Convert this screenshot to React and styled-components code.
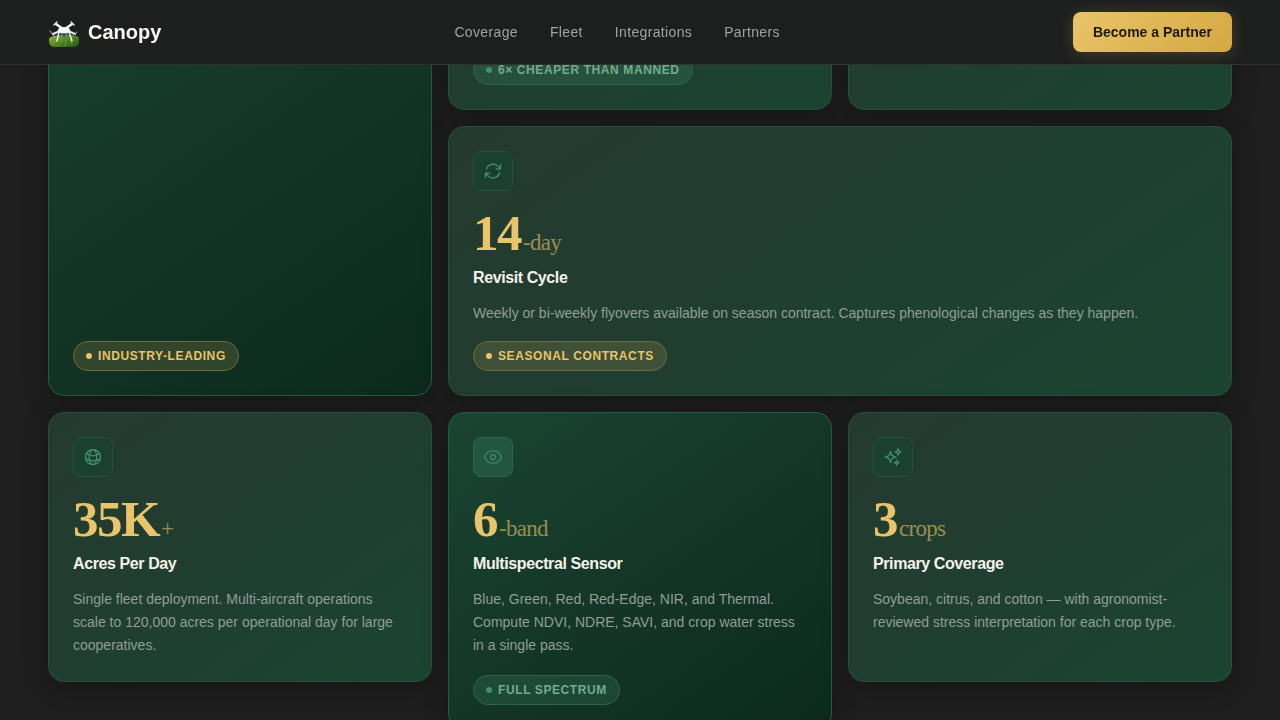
import React from "react";
import styled, { createGlobalStyle, css } from "styled-components";
import {
  HiOutlineArrowPath,
  HiOutlineEye,
  HiOutlineGlobeAlt,
  HiOutlineSparkles,
} from "react-icons/hi2";

const GlobalStyle = createGlobalStyle`
  *, *::before, *::after { box-sizing: border-box; }
  body {
    margin: 0;
    background: #1e1e1e;
    color: #f5f2ea;
    font-family: "Liberation Sans", Arial, sans-serif;
  }
  h3, p { margin: 0; }
`;

const Header = styled.header`
  position: fixed;
  inset: 0 0 auto;
  z-index: 10;
  display: flex;
  align-items: center;
  justify-content: space-between;
  padding: 12px 48px;
  background: #1d1f1e;
  border-bottom: 1px solid #303231;
`;

const Brand = styled.a`
  display: flex;
  align-items: center;
  gap: 8px;
  color: #f8f6f0;
  font-size: 20px;
  font-weight: 700;
  line-height: 32px;
  text-decoration: none;
`;

const Nav = styled.nav`
  display: flex;
  gap: 32px;
`;

const NavLink = styled.a`
  color: #a3a3a0;
  font-size: 14px;
  line-height: 24px;
  letter-spacing: 0.025em;
  text-decoration: none;
`;

const PartnerButton = styled.button`
  height: 40px;
  padding: 0 20px;
  border: 0;
  border-radius: 8px;
  background: linear-gradient(135deg, #e9c46a, #d4a843);
  box-shadow: 0 2px 16px rgba(233, 196, 106, 0.2);
  color: #1f1a0c;
  font-family: inherit;
  font-size: 14px;
  font-weight: 700;
  cursor: pointer;
`;

/* The first row is scrolled partly out of view beneath the header. */
const Grid = styled.main`
  display: grid;
  grid-template-columns: repeat(3, minmax(0, 1fr));
  grid-template-rows: 270px auto auto;
  gap: 16px;
  margin-top: -160px;
  padding: 0 48px 48px;
`;

const spans = {
  tall: css`
    grid-row: span 2;
  `,
  wide: css`
    grid-column: span 2;
  `,
};

const minHeights = { regular: "270px", large: "318px" };

const Card = styled.article`
  display: flex;
  flex-direction: column;
  align-items: flex-start;
  align-self: ${(p) => (p.$size ? "start" : "stretch")};
  min-height: ${(p) => minHeights[p.$size] || "0"};
  padding: 24px;
  border: 1px solid ${(p) => (p.$deep ? "#2a5a45" : "#2a4f3d")};
  border-radius: 16px;
  background: ${(p) =>
    p.$deep
      ? "linear-gradient(145deg, #1a4531 0%, #143526 55%, #0b2a1d 100%)"
      : "linear-gradient(145deg, #253a2f 0%, #203e30 45%, #1b4431 100%)"};
  box-shadow: 0 4px 24px rgba(0, 0, 0, 0.3);
  ${(p) => spans[p.$span]}
`;

const IconTile = styled.span`
  display: grid;
  place-items: center;
  width: 40px;
  height: 40px;
  margin-bottom: 16px;
  border: 1px solid ${(p) => (p.$bright ? "#2d664e" : "#23513d")};
  border-radius: 8px;
  background: ${(p) => (p.$bright ? "#235640" : "#1c4030")};
  color: ${(p) => (p.$bright ? "#3d8868" : "#40916c")};
`;

const Figure = styled.p`
  color: #e9c46a;
  font-family: "Liberation Serif", "Times New Roman", serif;
  font-size: 51px;
  font-weight: 700;
  line-height: 52px;
  letter-spacing: -0.03em;
`;

const Unit = styled.span`
  margin-left: 2px;
  font-size: 23px;
  font-weight: 400;
  line-height: 23px;
  letter-spacing: -0.03em;
  opacity: 0.6;
`;

const Title = styled.h3`
  margin-top: 8px;
  font-size: 16px;
  line-height: 21px;
  letter-spacing: -0.025em;
`;

const Description = styled.p`
  margin-top: 14px;
  color: #8f9f96;
  font-size: 14px;
  line-height: 23px;
`;

const tones = {
  gold: css`
    border-color: #6d6b40;
    background: rgba(233, 196, 106, 0.15);
    color: #e9c46a;
    --dot: #e9c46a;
  `,
  green: css`
    border-color: #2d644c;
    background: rgba(64, 145, 108, 0.22);
    color: #74ab8e;
    --dot: #40916c;
  `,
};

const TagArea = styled.div`
  display: flex;
  margin-top: auto;
  padding-top: 16px;
`;

const Tag = styled.span`
  display: inline-flex;
  align-items: center;
  gap: 6px;
  padding: 5px 12px;
  border: 1px solid;
  border-radius: 15px;
  font-size: 12px;
  font-weight: 700;
  line-height: 18px;
  letter-spacing: 0.05em;
  text-transform: uppercase;
  white-space: nowrap;
  ${(p) => tones[p.$tone]}

  &::before {
    content: "";
    width: 6px;
    height: 6px;
    border-radius: 50%;
    background: var(--dot);
  }
`;

function DroneLogo() {
  return (
    <svg width="32" height="32" viewBox="0 0 32 32" fill="none" strokeLinecap="round" aria-hidden="true">
      <defs>
        <linearGradient id="field" x1="0" y1="0" x2="1" y2="1">
          <stop offset="0" stopColor="#a3ad4c" />
          <stop offset="0.45" stopColor="#548c22" />
          <stop offset="1" stopColor="#24511a" />
        </linearGradient>
      </defs>
      <path
        d="M1 22 Q5 19 10 19.500 Q20 17 31 21 V25 Q31 31 25 31 H7 Q1 31 1 25Z"
        fill="url(#field)"
      />
      <path
        d="M4 29 L10 24 M10 30 L14 24 M17 30 L18 24 M24 29 L22 24"
        stroke="#9fc43b"
        strokeWidth="1"
        opacity="0.4"
      />
      <path d="M8 8 L15 13 M24 8 L17 13" stroke="#f1f3f3" strokeWidth="2.500" />
      <path d="M12 15 L5 18 M20 15 L27 18" stroke="#e4e8e8" strokeWidth="2" />
      <path d="M6 9 L9 6 M23 6 L26 9" stroke="#dfe3e3" strokeWidth="1.500" />
      <path d="M2 15 L6 20 M26 19 L29 16" stroke="#bcc3c2" strokeWidth="1" />
      <path d="M11 12 Q16 10 21 12 L23 16 Q16 19 9 16Z" fill="#fafbfb" />
      <path d="M11 16 L9 25 M21 16 L24 25" stroke="#eef1f0" strokeWidth="1.500" />
      <path d="M13 17 L14 21 H18 L19 17Z" fill="#6c8790" />
      <circle cx="16" cy="19" r="1.500" fill="#36464d" />
    </svg>
  );
}

const navItems = ["Coverage", "Fleet", "Integrations", "Partners"];

const metrics = [
  {
    Icon: HiOutlineArrowPath,
    figure: "14",
    unit: "-day",
    title: "Revisit Cycle",
    text: "Weekly or bi-weekly flyovers available on season contract. Captures phenological changes as they happen.",
    tag: "Seasonal Contracts",
    tone: "gold",
    span: "wide",
  },
  {
    Icon: HiOutlineGlobeAlt,
    figure: "35K",
    unit: "+",
    title: "Acres Per Day",
    text: "Single fleet deployment. Multi-aircraft operations scale to 120,000 acres per operational day for large cooperatives.",
    size: "regular",
  },
  {
    Icon: HiOutlineEye,
    figure: "6",
    unit: "-band",
    title: "Multispectral Sensor",
    text: "Blue, Green, Red, Red-Edge, NIR, and Thermal. Compute NDVI, NDRE, SAVI, and crop water stress in a single pass.",
    tag: "Full Spectrum",
    tone: "green",
    deep: true,
    size: "large",
  },
  {
    Icon: HiOutlineSparkles,
    figure: "3",
    unit: "crops",
    title: "Primary Coverage",
    text: "Soybean, citrus, and cotton — with agronomist-reviewed stress interpretation for each crop type.",
    size: "regular",
  },
];

function CardTag({ tone, children }) {
  return (
    <TagArea>
      <Tag $tone={tone}>{children}</Tag>
    </TagArea>
  );
}

function MetricCard({ Icon, figure, unit, title, text, tag, tone, span, deep, size }) {
  return (
    <Card $span={span} $deep={deep} $size={size}>
      <IconTile $bright={deep}>
        <Icon size={20} aria-hidden="true" />
      </IconTile>
      <Figure>
        {figure}
        <Unit>{unit}</Unit>
      </Figure>
      <Title>{title}</Title>
      <Description>{text}</Description>
      {tag && <CardTag tone={tone}>{tag}</CardTag>}
    </Card>
  );
}

export default function App() {
  return (
    <>
      <GlobalStyle />
      <Header>
        <Brand href="#top">
          <DroneLogo />
          Canopy
        </Brand>
        <Nav aria-label="Main">
          {navItems.map((item) => (
            <NavLink key={item} href={`#${item.toLowerCase()}`}>
              {item}
            </NavLink>
          ))}
        </Nav>
        <PartnerButton type="button">Become a Partner</PartnerButton>
      </Header>
      <Grid>
        <Card $span="tall" $deep>
          <CardTag tone="gold">Industry-Leading</CardTag>
        </Card>
        <Card>
          <CardTag tone="green">6× Cheaper Than Manned</CardTag>
        </Card>
        <Card />
        {metrics.map((metric) => (
          <MetricCard key={metric.title} {...metric} />
        ))}
      </Grid>
    </>
  );
}
